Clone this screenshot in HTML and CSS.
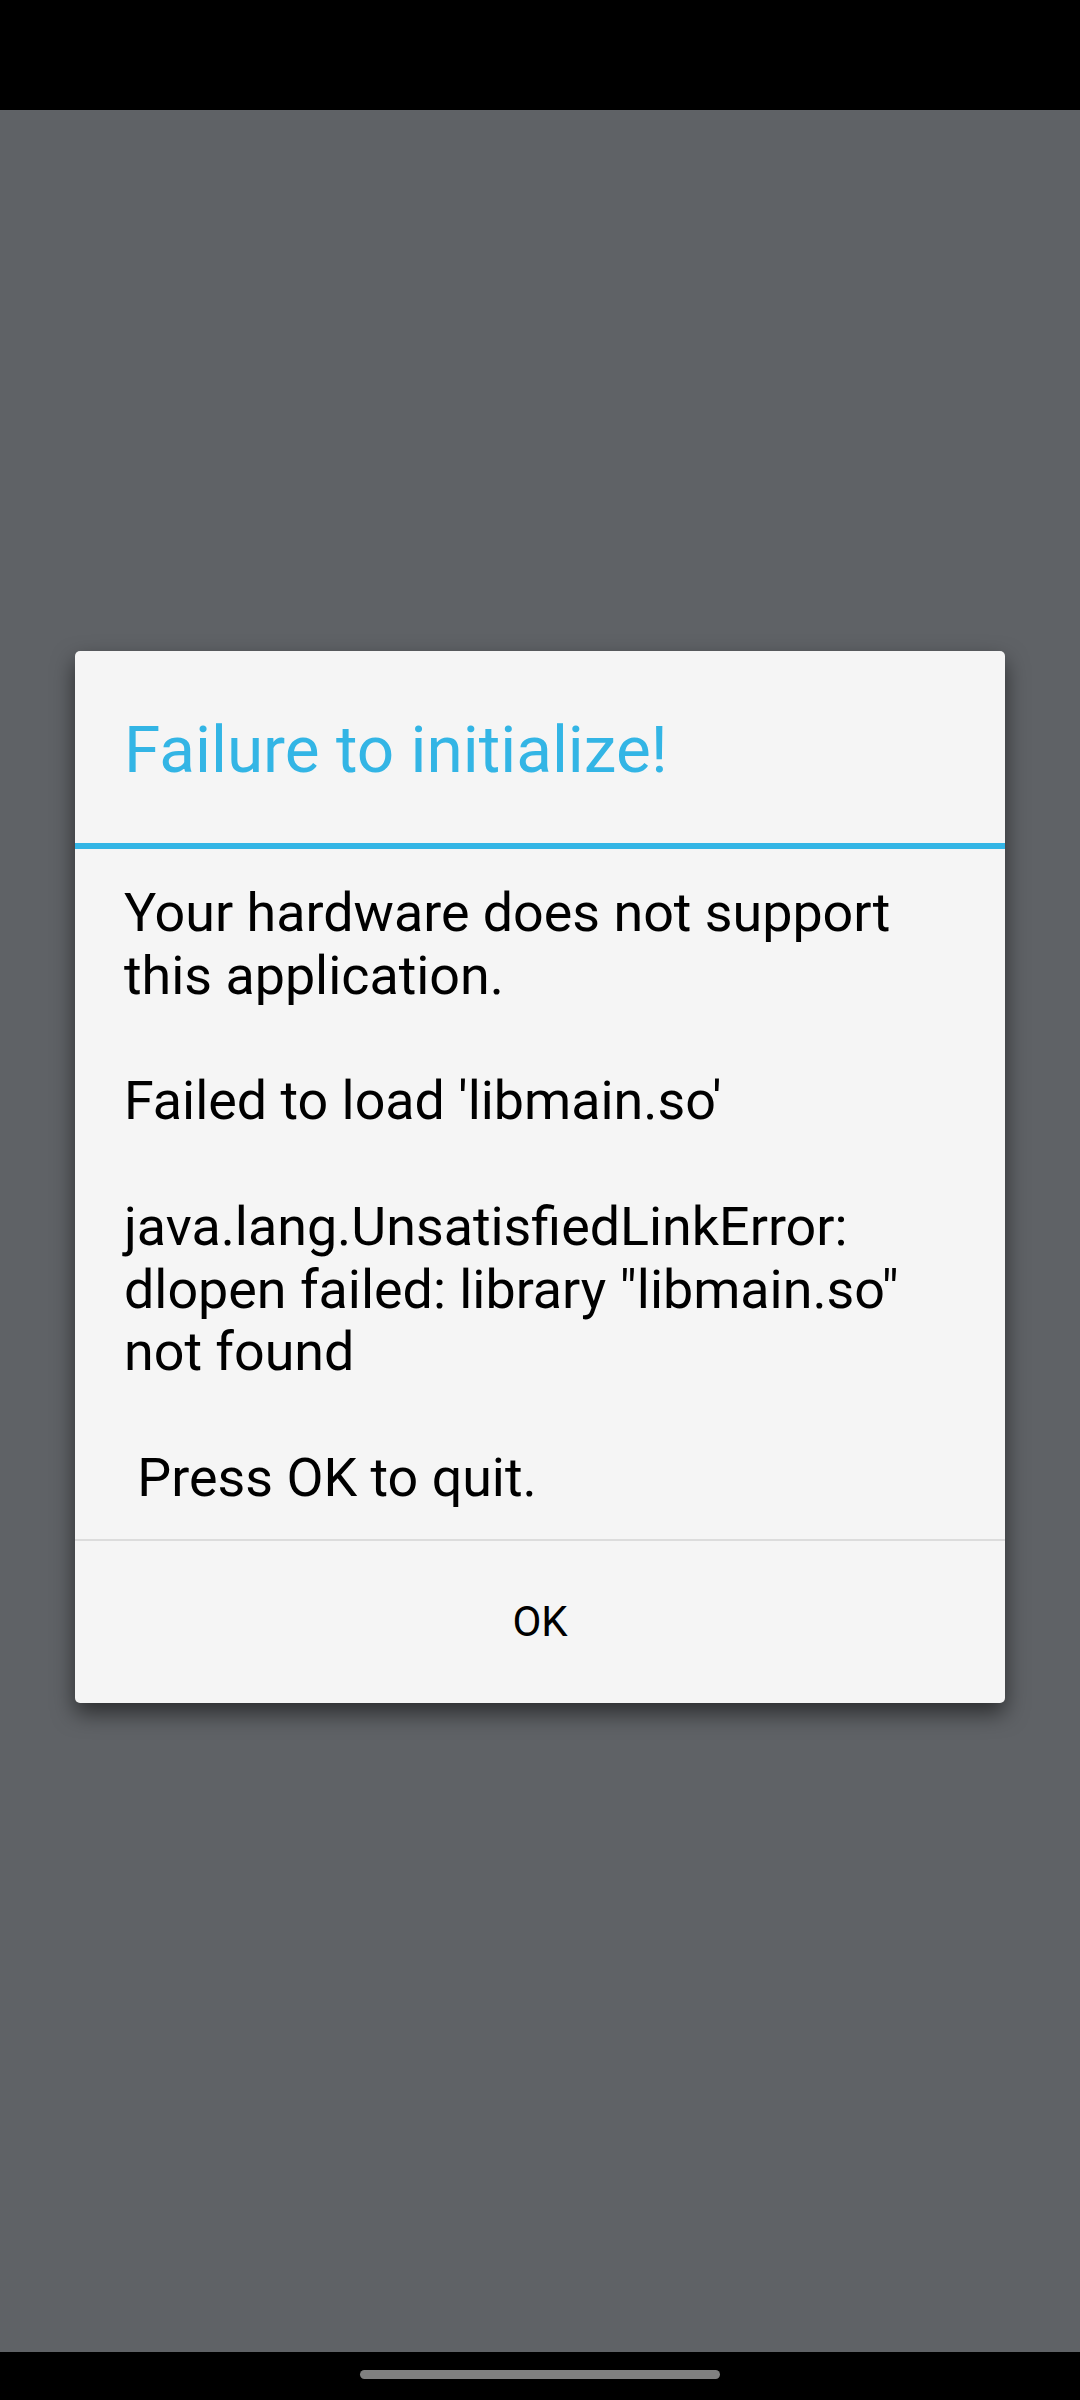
FILE: index.html
```html
<!DOCTYPE html>
<html lang="en">

<head>
    <meta charset="UTF-8">
    <meta name="viewport" content="width=device-width, initial-scale=1.0">
    <title>Failure to initialize!</title>
    <link rel="stylesheet" href="styles.css">
</head>

<body>
    <div class="status-bar"></div>

    <!-- Dim screen behind the dialog -->
    <div class="screen">
        <div class="dialog">
            <div class="dialog-title">Failure to initialize!</div>
            <div class="dialog-message">Your hardware does not support this application.

Failed to load 'libmain.so'

java.lang.UnsatisfiedLinkError: dlopen failed: library "libmain.so" not found

 Press OK to quit.</div>
            <div class="dialog-buttons">
                <button class="ok-btn">OK</button>
            </div>
        </div>
    </div>

    <div class="nav-bar">
        <div class="home-pill"></div>
    </div>
</body>

</html>
```

FILE: styles.css
```css
/* Giao diện chung */
html,
body {
    height: 100%;
}

body {
    margin: 0;
    padding: 0;
    font-family: Roboto, "Liberation Sans", sans-serif;
    background-color: #5f6266;
    display: flex;
    flex-direction: column;
}

.status-bar {
    height: 110px;
    background-color: #000;
}

.screen {
    flex: 1;
    padding: 541px 75px 0 75px;
}

/* Dialog */
.dialog {
    background-color: #f5f5f5;
    border-radius: 5px;
    box-shadow: 0 10px 22px rgba(0, 0, 0, 0.55);
    overflow: hidden;
}

.dialog-title {
    color: #33b5e5;
    font-size: 65.7px;
    line-height: 80px;
    padding: 59px 49px 53px 49px;
    border-bottom: 6px solid #33b5e5;
}

.dialog-message {
    color: #000;
    font-size: 53.8px;
    line-height: 62.75px;
    white-space: pre-wrap;
    padding: 33px 49px 29px 49px;
}

.dialog-buttons {
    border-top: 2px solid #dcdcdc;
    height: 162px;
    display: flex;
    align-items: center;
    justify-content: center;
}

.ok-btn {
    background: none;
    border: none;
    padding: 0;
    font-family: Roboto, "Liberation Sans", sans-serif;
    font-size: 42px;
    color: #000;
}

/* Thanh điều hướng */
.nav-bar {
    height: 48px;
    background-color: #000;
    display: flex;
    justify-content: center;
}

.home-pill {
    margin-top: 18px;
    width: 360px;
    height: 9px;
    border-radius: 5px;
    background-color: #808080;
}
```
